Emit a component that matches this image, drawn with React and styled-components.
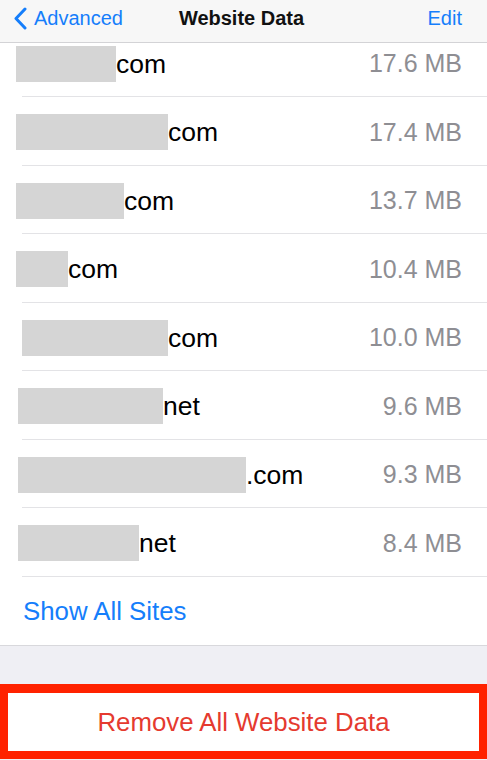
import styled, { createGlobalStyle } from "styled-components";

const GlobalStyle = createGlobalStyle`
  html, body {
    margin: 0;
    padding: 0;
    background: #ffffff;
  }
  body {
    font-family: "Liberation Sans", Arial, sans-serif;
    -webkit-font-smoothing: antialiased;
  }
`;

const Screen = styled.div`
  width: 487px;
  height: 760px;
  display: flex;
  flex-direction: column;
  overflow: hidden;
  background: #efeff4;
`;

const NavBar = styled.div`
  height: 43px;
  flex: none;
  box-sizing: border-box;
  display: grid;
  grid-template-columns: 1fr auto 1fr;
  align-items: center;
  padding: 0 25px 6px 13px;
  background: #f7f7f7;
  border-bottom: 1px solid #d3d3d6;
  font-size: 20px;
`;

const BackLink = styled.div`
  display: flex;
  align-items: center;
  gap: 7px;
  color: #157efb;
`;

const Title = styled.div`
  font-weight: bold;
  color: #111;
  font-size: 20px;
  padding-left: 8px;
`;

const EditLink = styled.div`
  justify-self: end;
  color: #157efb;
`;

const ListViewport = styled.div`
  height: 534px;
  flex: none;
  overflow: hidden;
  background: #ffffff;
`;

const ListInner = styled.div`
  margin-top: -14.5px;
`;

const Row = styled.div`
  height: 68.5px;
  box-sizing: border-box;
  display: flex;
  align-items: center;
  justify-content: space-between;
  padding: 0 25px 0 ${(p) => p.$indent}px;
  position: relative;
  font-size: 25px;

  &::after {
    content: "";
    position: absolute;
    left: 22px;
    right: 0;
    bottom: 0;
    height: 1px;
    background: #e3e3e6;
  }
`;

const SiteName = styled.div`
  display: flex;
  align-items: center;
  color: #000;
  font-size: 26.5px;
  padding-top: 3px;
`;

const Redacted = styled.span`
  display: inline-block;
  width: ${(p) => p.$w}px;
  height: 36px;
  background: #d5d5d5;
  margin-top: -1px;
`;

const Size = styled.div`
  color: #8e8e93;
  padding-top: 2px;
`;

const ShowAllRow = styled.div`
  height: 68px;
  flex: none;
  display: flex;
  align-items: center;
  padding-left: 23px;
  background: #ffffff;
  border-bottom: 1px solid #d8d8dc;
  color: #157efb;
  font-size: 25.8px;
`;

const GroupGap = styled.div`
  height: 38px;
  flex: none;
`;

const Highlight = styled.div`
  flex: none;
  border: 8px solid #ff2200;
  border-top-width: 9px;
  background: #ffffff;
`;

const DangerButton = styled.div`
  height: 58px;
  display: flex;
  align-items: center;
  justify-content: center;
  color: #e53a2f;
  font-size: 25.8px;
`;

const sites = [
  { indent: 16, w: 100, suffix: "com", size: "17.6 MB" },
  { indent: 16, w: 152, suffix: "com", size: "17.4 MB" },
  { indent: 16, w: 108, suffix: "com", size: "13.7 MB" },
  { indent: 16, w: 52, suffix: "com", size: "10.4 MB" },
  { indent: 22, w: 146, suffix: "com", size: "10.0 MB" },
  { indent: 18, w: 145, suffix: "net", size: "9.6 MB" },
  { indent: 18, w: 228, suffix: ".com", size: "9.3 MB" },
  { indent: 18, w: 121, suffix: "net", size: "8.4 MB" },
];

function Chevron() {
  return (
    <svg width="14" height="23" viewBox="0 0 14 23" fill="none">
      <path
        d="M12 2 L3 11.5 L12 21"
        stroke="#157efb"
        strokeWidth="3"
        strokeLinecap="round"
        strokeLinejoin="round"
      />
    </svg>
  );
}

function App() {
  return (
    <Screen>
      <GlobalStyle />
      <NavBar>
        <BackLink>
          <Chevron />
          Advanced
        </BackLink>
        <Title>Website Data</Title>
        <EditLink>Edit</EditLink>
      </NavBar>
      <ListViewport>
        <ListInner>
          {sites.map((s, i) => (
            <Row key={i} $indent={s.indent}>
              <SiteName>
                <Redacted $w={s.w} />
                {s.suffix}
              </SiteName>
              <Size>{s.size}</Size>
            </Row>
          ))}
        </ListInner>
      </ListViewport>
      <ShowAllRow>Show All Sites</ShowAllRow>
      <GroupGap />
      <Highlight>
        <DangerButton>Remove All Website Data</DangerButton>
      </Highlight>
    </Screen>
  );
}

export default App;
